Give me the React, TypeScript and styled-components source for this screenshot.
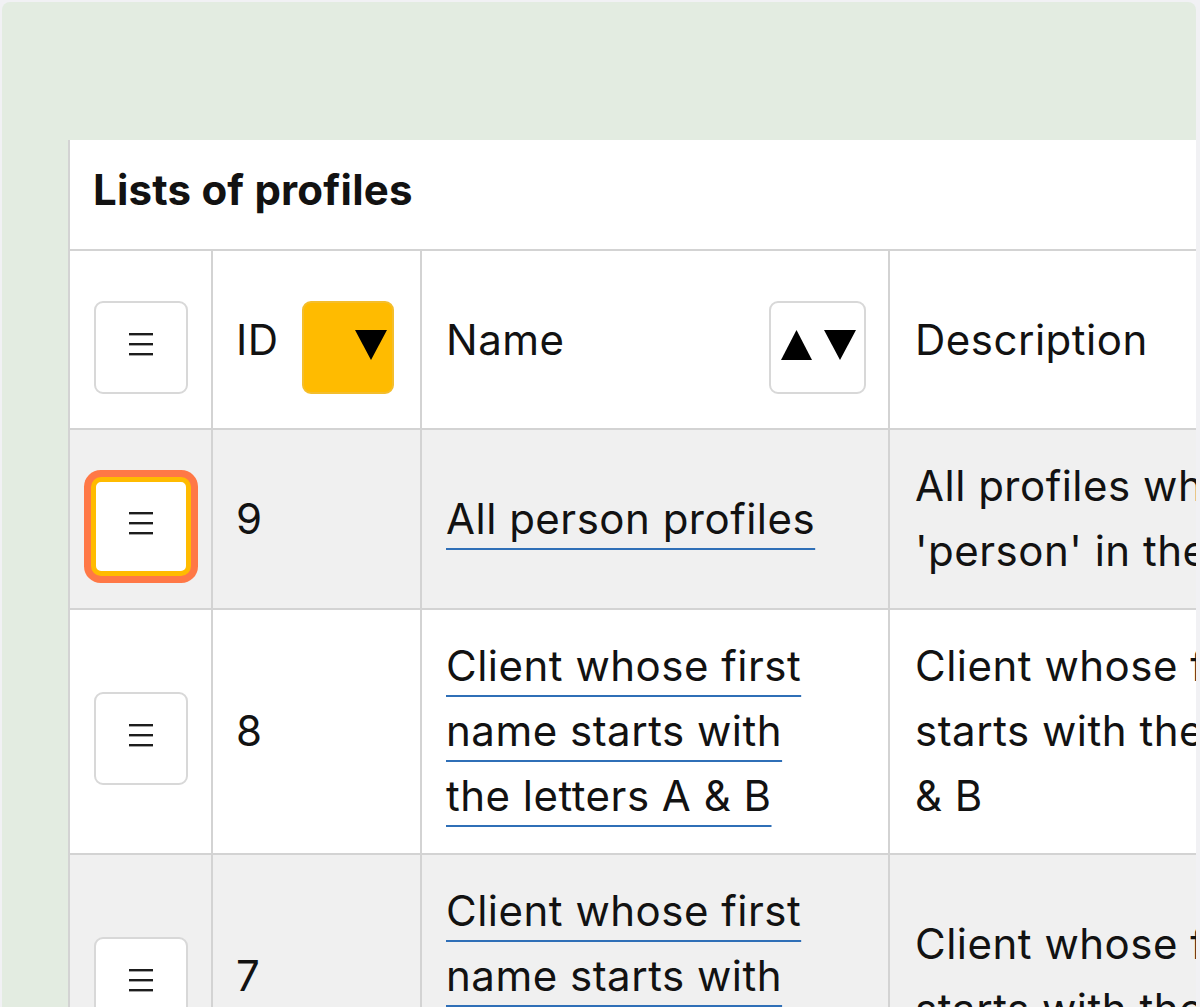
import React from "react";
import styled, { createGlobalStyle, css } from "styled-components";

const GlobalStyle = createGlobalStyle`
  html, body { margin: 0; padding: 0; background: #f1f1f4; }
  body {
    font-family: Inter, "Liberation Sans", sans-serif;
    color: #121212;
    overflow: hidden;
  }
`;

const Frame = styled.main`
  margin: 2px 4px 0 2px;
  height: 1005px;
  box-sizing: border-box;
  padding: 138px 0 0 66px;
  background: #e3ece1;
  border-radius: 8px 8px 0 0;
  overflow: hidden;
`;

const Card = styled.section`
  background: #fff;
  border-left: 2px solid #d3d3d3;
  width: max-content;
`;

const Title = styled.h2`
  margin: 0;
  padding: 17px 23px 27px;
  font-size: 42px;
  line-height: 65px;
  font-weight: 700;
  letter-spacing: 0.2px;
  border-bottom: 2px solid #d3d3d3;
`;

const Table = styled.table`
  border-collapse: separate;
  border-spacing: 0;
  table-layout: fixed;
  font-size: 42px;
  line-height: 65px;
  letter-spacing: 0.5px;
`;

const cellBase = css<{ $w: number; $pl: number; $pr: number }>`
  width: ${(p) => p.$w}px;
  padding-left: ${(p) => p.$pl}px;
  padding-right: ${(p) => p.$pr}px;
  border-right: 2px solid #d3d3d3;
  border-bottom: 2px solid #d3d3d3;
  vertical-align: middle;
  text-align: left;
`;

const HeadCell = styled.th<{ $w: number; $pl: number; $pr: number }>`
  ${cellBase};
  height: 177px;
  padding-top: 0;
  padding-bottom: 0;
  font-weight: 400;
`;

const HeadInner = styled.div<{ $center?: boolean }>`
  display: flex;
  align-items: center;
  justify-content: ${(p) => (p.$center ? "center" : "space-between")};
`;

const Row = styled.tr<{ $shade?: boolean }>`
  background: ${(p) => (p.$shade ? "#f0f0f0" : "#ffffff")};
`;

const Cell = styled.td<{ $w: number; $pl: number; $pr: number }>`
  ${cellBase};
  padding-top: 23px;
  padding-bottom: 25px;
`;

const CenterBox = styled.div`
  display: flex;
  justify-content: center;
`;

const NameBox = styled.div`
  max-width: 390px;
`;

const NameLink = styled.a`
  color: #121212;
  text-decoration: underline;
  text-decoration-color: #2f6fb7;
  text-decoration-thickness: 2px;
  text-underline-offset: 14px;
`;

const MenuButton = styled.button<{ $focused?: boolean }>`
  width: 94px;
  height: 93px;
  margin-top: 16px;
  display: flex;
  align-items: center;
  justify-content: center;
  padding: 0 0 6px;
  background: #fff;
  border: 2px solid #d8d8d8;
  border-radius: 9px;
  cursor: pointer;
  ${(p) =>
    p.$focused &&
    css`
      border-color: #ffbb00;
      box-shadow: 0 0 0 3px #ffbb00, 0 0 0 10px #ff7846;
      border-radius: 7px;
    `}
`;

const SortButton = styled.button<{ $active?: boolean }>`
  height: 93px;
  margin-top: 16px;
  display: flex;
  align-items: center;
  gap: 12px;
  box-sizing: border-box;
  border-radius: 9px;
  cursor: pointer;
  ${(p) =>
    p.$active
      ? css`
          width: 92px;
          justify-content: flex-end;
          padding: 0 5px 6px 0;
          background: #ffbb00;
          border: 2px solid #f4be2c;
        `
      : css`
          width: 97px;
          justify-content: center;
          padding: 0 0 6px 2px;
          background: #fff;
          border: 2px solid #d8d8d8;
        `}
`;

const HeadLabel = styled.span`
  line-height: 65px;
`;

const Bars = () => (
  <svg width="24" height="23" viewBox="0 0 24 23" aria-hidden="true">
    <rect x="0" y="0" width="24" height="2.4" fill="#1d1d1d" />
    <rect x="0" y="10" width="24" height="2.4" fill="#1d1d1d" />
    <rect x="0" y="20" width="24" height="2.4" fill="#1d1d1d" />
  </svg>
);

const Down = () => (
  <svg width="32" height="30" viewBox="0 0 32 30" aria-hidden="true">
    <polygon points="0,0 32,0 16,30" fill="#000" />
  </svg>
);

const Up = () => (
  <svg width="31" height="30" viewBox="0 0 31 30" aria-hidden="true">
    <polygon points="0,30 31,30 15.5,0" fill="#000" />
  </svg>
);

type Profile = { id: number; name: string; description: string };

const profiles: Profile[] = [
  {
    id: 9,
    name: "All person profiles",
    description: "All profiles which have 'person' in their type",
  },
  {
    id: 8,
    name: "Client whose first name starts with the letters A & B",
    description: "Client whose first name starts with the letters A & B",
  },
  {
    id: 7,
    name: "Client whose first name starts with the letter A",
    description: "Client whose first name starts with the letter A",
  },
];

const COLS = {
  menu: { $w: 141, $pl: 0, $pr: 0 },
  id: { $w: 158, $pl: 23, $pr: 26 },
  name: { $w: 420, $pl: 24, $pr: 22 },
  desc: { $w: 494, $pl: 25, $pr: 25 },
};

export default function App() {
  return (
    <>
      <GlobalStyle />
      <Frame>
        <Card>
          <Title>Lists of profiles</Title>
          <Table>
            <thead>
              <tr>
                <HeadCell {...COLS.menu}>
                  <HeadInner $center>
                    <MenuButton aria-label="Columns menu">
                      <Bars />
                    </MenuButton>
                  </HeadInner>
                </HeadCell>
                <HeadCell {...COLS.id}>
                  <HeadInner>
                    <HeadLabel>ID</HeadLabel>
                    <SortButton $active aria-label="Sorted descending">
                      <Down />
                    </SortButton>
                  </HeadInner>
                </HeadCell>
                <HeadCell {...COLS.name}>
                  <HeadInner>
                    <HeadLabel>Name</HeadLabel>
                    <SortButton aria-label="Sort by name">
                      <Up />
                      <Down />
                    </SortButton>
                  </HeadInner>
                </HeadCell>
                <HeadCell {...COLS.desc}>
                  <HeadInner>
                    <HeadLabel>Description</HeadLabel>
                  </HeadInner>
                </HeadCell>
              </tr>
            </thead>
            <tbody>
              {profiles.map((p, i) => (
                <Row key={p.id} $shade={i % 2 === 0}>
                  <Cell {...COLS.menu}>
                    <CenterBox>
                      <MenuButton $focused={i === 0} aria-label="Row menu">
                        <Bars />
                      </MenuButton>
                    </CenterBox>
                  </Cell>
                  <Cell {...COLS.id}>{p.id}</Cell>
                  <Cell {...COLS.name}>
                    <NameBox>
                      <NameLink href="#">{p.name}</NameLink>
                    </NameBox>
                  </Cell>
                  <Cell {...COLS.desc}>{p.description}</Cell>
                </Row>
              ))}
            </tbody>
          </Table>
        </Card>
      </Frame>
    </>
  );
}
